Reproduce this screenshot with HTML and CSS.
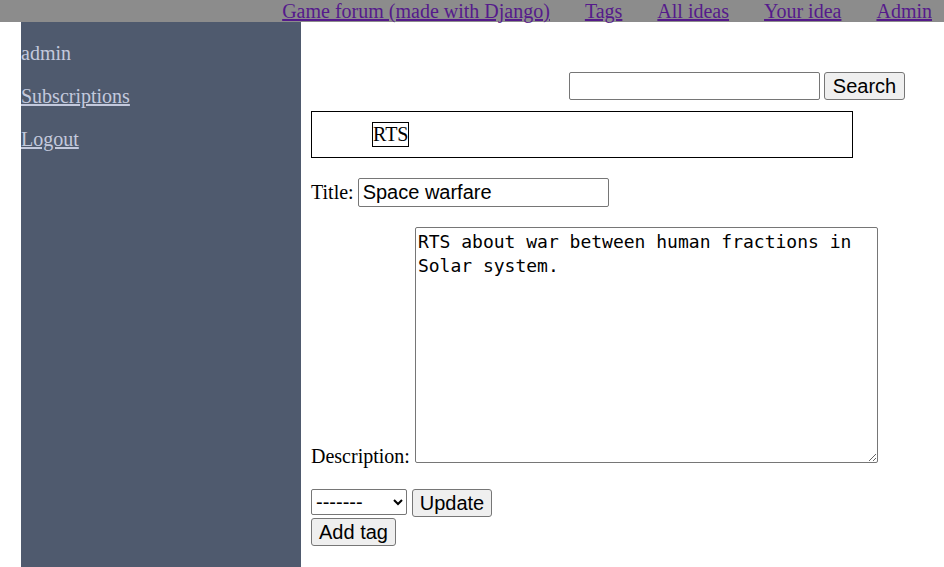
FILE: index.html
```html
<!DOCTYPE html>
<html>
<head>
<meta charset="utf-8">
<link rel="stylesheet" href="styles.css">
</head>
<body>
<header class="topbar">
  <a href="#" class="toplink">Game forum (made with Django)</a>
  <a href="#" class="toplink">Tags</a>
  <a href="#" class="toplink">All ideas</a>
  <a href="#" class="toplink">Your idea</a>
  <a href="#" class="toplink">Admin</a>
</header>
<div class="layout">
  <aside class="sidebar">
    <p class="side-item">admin</p>
    <p class="side-item"><a href="#" class="side-link">Subscriptions</a></p>
    <p class="side-item"><a href="#" class="side-link">Logout</a></p>
  </aside>
  <main class="main">
    <form class="search">
      <input type="text" class="search-input">
      <button type="button" class="btn btn-search">Search</button>
    </form>
    <div class="tags">
      <span class="tag">RTS</span>
    </div>
    <form class="idea">
      <div class="row title-row">
        <label class="lbl">Title:</label>
        <input type="text" class="title-input" value="Space warfare">
      </div>
      <div class="row desc-row">
        <label class="lbl">Description:</label>
        <textarea class="desc">RTS about war between human fractions in Solar system.</textarea>
      </div>
      <div class="row select-row">
        <select class="tag-select"><option>-------</option></select>
        <button type="button" class="btn btn-update">Update</button>
      </div>
      <div class="row add-row">
        <button type="button" class="btn btn-add">Add tag</button>
      </div>
    </form>
  </main>
</div>
</body>
</html>
```
FILE: styles.css
```css
html, body {
  margin: 0;
  padding: 0;
  background: #ffffff;
}
body {
  font-family: "Liberation Serif", "Times New Roman", serif;
  font-size: 20px;
  color: #000;
  height: 567px;
  overflow: hidden;
}
.topbar {
  background: #8c8c8c;
  height: 22px;
  display: flex;
  justify-content: flex-end;
  align-items: flex-start;
  gap: 35px;
  padding-right: 12px;
  line-height: 22px;
}
.toplink {
  color: #551a8b;
  font-size: 20px;
}
.layout {
  display: flex;
  height: 545px;
}
.sidebar {
  margin-left: 21px;
  width: 280px;
  background: #4f5a6e;
  color: #c3c9dd;
  padding-top: 20px;
  box-sizing: border-box;
}
.side-item {
  margin: 0 0 20px 0;
  line-height: 23px;
}
.side-link {
  color: #c3c9dd;
}
.main {
  padding-left: 10px;
  flex: 1;
}
.search {
  margin: 50px 0 0 258px;
  display: flex;
  gap: 4px;
  height: 28px;
}
.search-input {
  width: 251px;
  height: 28px;
  box-sizing: border-box;
  border: 1px solid #767676;
  border-radius: 2px;
  font-family: "Liberation Sans", Arial, sans-serif;
  font-size: 20px;
  padding: 1px 2px;
  margin: 0;
}
.btn {
  font-family: "Liberation Sans", Arial, sans-serif;
  font-size: 20px;
  background: #efefef;
  border: 1px solid #767676;
  border-radius: 3px;
  padding: 1px 0;
  height: 28px;
  margin: 0;
  color: #000;
  line-height: 24px;
  box-sizing: border-box;
  text-align: center;
}
.btn-search {
  width: 81px;
}
.btn-update {
  width: 80px;
}
.btn-add {
  width: 85px;
}
.tags {
  margin-top: 11px;
  width: 542px;
  height: 47px;
  box-sizing: border-box;
  border: 1px solid #000;
  padding: 10px 0 0 60px;
}
.tag {
  display: inline-block;
  border: 1px solid #000;
  line-height: 23px;
  padding: 0;
}
.row {
  display: flex;
  align-items: flex-end;
}
.title-row {
  margin-top: 20px;
}
.lbl {
  line-height: 23px;
}
.title-row .lbl {
  margin-right: 4px;
  margin-bottom: 3px;
}
.title-input {
  width: 251px;
  height: 29px;
  box-sizing: border-box;
  border: 1px solid #767676;
  border-radius: 2px;
  font-family: "Liberation Sans", Arial, sans-serif;
  font-size: 20px;
  padding: 1px 4px;
  margin: 0;
}
.desc-row {
  margin-top: 20px;
}
.desc-row .lbl {
  margin-right: 5px;
  margin-bottom: -5px;
}
.desc {
  width: 463px;
  height: 236px;
  box-sizing: border-box;
  border: 1px solid #767676;
  border-radius: 2px;
  font-family: "DejaVu Sans Mono", monospace;
  font-size: 18px;
  line-height: 24px;
  padding: 2px;
  margin: 0;
  resize: both;
}
.select-row {
  margin-top: 26px;
  align-items: flex-start;
  gap: 5px;
}
.tag-select {
  width: 96px;
  height: 26px;
  font-family: "Liberation Sans", Arial, sans-serif;
  font-size: 20px;
  border: 1px solid #767676;
  border-radius: 2px;
  background: #fff;
  margin: 0;
}
.add-row {
  margin-top: 1px;
}
```
